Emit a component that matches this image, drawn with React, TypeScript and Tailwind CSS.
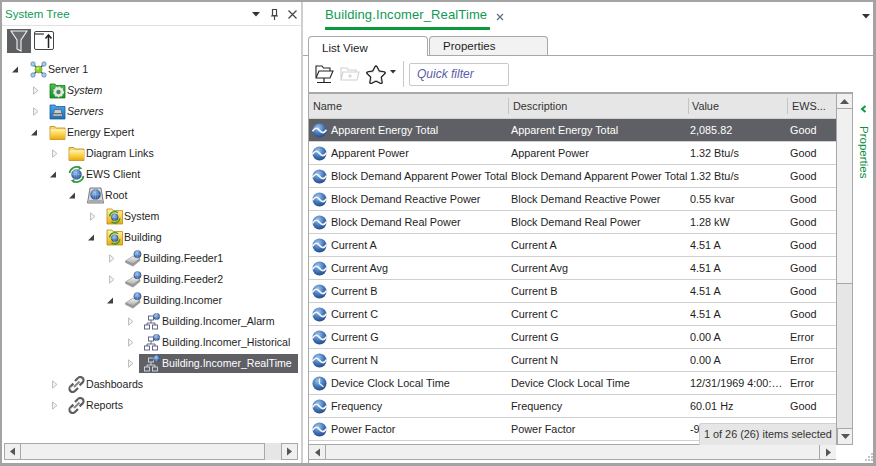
import React from "react";

const defs = (
  <svg width="0" height="0" className="absolute">
    <defs>
      <linearGradient id="yf" x1="0" y1="0" x2="0" y2="1">
        <stop offset="0" stopColor="#fff3b0" />
        <stop offset="0.5" stopColor="#fbd34a" />
        <stop offset="1" stopColor="#e9a90f" />
      </linearGradient>
      <radialGradient id="gl" cx="0.4" cy="0.3" r="0.8">
        <stop offset="0" stopColor="#9fc4ea" />
        <stop offset="0.55" stopColor="#3f73b5" />
        <stop offset="1" stopColor="#1f3f78" />
      </radialGradient>
      <linearGradient id="gf" x1="0" y1="0" x2="0" y2="1">
        <stop offset="0" stopColor="#4cc04c" />
        <stop offset="1" stopColor="#1b8f2b" />
      </linearGradient>
      <linearGradient id="bf" x1="0" y1="0" x2="0" y2="1">
        <stop offset="0" stopColor="#4aa6ec" />
        <stop offset="1" stopColor="#1670c4" />
      </linearGradient>
      <linearGradient id="dv" x1="0" y1="0" x2="0" y2="1">
        <stop offset="0" stopColor="#f4f4f4" />
        <stop offset="1" stopColor="#a8a8a8" />
      </linearGradient>
    </defs>
  </svg>
);

const Folder = () => (
  <svg width="17" height="16" viewBox="0 0 17 16" className="shrink-0">
    <path d="M1 1.5h5l1 1.5h9v11.5H1z" fill="#f7d668" stroke="#b98a1a" strokeWidth="0.8" />
    <rect x="1.5" y="4.2" width="14.5" height="10" fill="url(#yf)" />
  </svg>
);

const SystemFolder = () => (
  <svg width="17" height="16" viewBox="0 0 17 16" className="shrink-0">
    <path d="M1 1h5l1 1.5h9v12.5H1z" fill="url(#gf)" stroke="#157a22" strokeWidth="0.8" />
    <circle cx="9.5" cy="9" r="3.5" fill="none" stroke="#e4e9e4" strokeWidth="2.6" />
    <circle cx="9.5" cy="9" r="4.7" fill="none" stroke="#e4e9e4" strokeWidth="1.4" strokeDasharray="1.7 1.4" />
    <circle cx="9.5" cy="9" r="1.8" fill="#68746b" />
  </svg>
);

const ServersFolder = () => (
  <svg width="17" height="16" viewBox="0 0 17 16" className="shrink-0">
    <path d="M1 1h5l1 1.5h9v12.5H1z" fill="url(#bf)" stroke="#115f9f" strokeWidth="0.8" />
    <path d="M5.5 5.5h6.5l1 4H4.5z" fill="#c6ccd2" stroke="#59626b" strokeWidth="0.8" />
    <rect x="3.8" y="9.5" width="9.6" height="3" fill="#aab1b8" stroke="#59626b" strokeWidth="0.8" />
  </svg>
);

const Globe = ({ cx, cy, r }: { cx: number; cy: number; r: number }) => (
  <g>
    <circle cx={cx} cy={cy} r={r} fill="url(#gl)" stroke="#24477f" strokeWidth="0.4" />
    <path d={`M${cx - r} ${cy}h${2 * r}M${cx} ${cy - r}v${2 * r}`} stroke="#c7dcf2" strokeWidth="0.4" opacity="0.7" />
    <ellipse cx={cx} cy={cy} rx={r * 0.5} ry={r} fill="none" stroke="#c7dcf2" strokeWidth="0.4" opacity="0.7" />
  </g>
);

const Ews = () => (
  <svg width="17" height="17" viewBox="0 0 17 17" className="shrink-0">
    <path d="M1.5 7A7.2 7.2 0 0 1 12 1.8" fill="none" stroke="#2f9b3a" strokeWidth="1.7" />
    <path d="M15.5 10A7.2 7.2 0 0 1 5 15.2" fill="none" stroke="#2f9b3a" strokeWidth="1.7" />
    <path d="M11 0l3.2 2.6L10.6 4z" fill="#2f9b3a" />
    <path d="M6 17l-3.2-2.6L6.4 13z" fill="#2f9b3a" />
    <Globe cx={8.5} cy={8.5} r={5} />
  </svg>
);

const RootIcon = () => (
  <svg width="17" height="17" viewBox="0 0 17 17" className="shrink-0">
    <path d="M3 1h11l2.5 15H0.5z" fill="#d8d8d8" stroke="#6d6d6d" strokeWidth="0.9" strokeLinejoin="round" />
    <Globe cx={8.5} cy={7.6} r={5} />
    <rect x="2" y="13" width="13" height="2" fill="#a9a9a9" />
  </svg>
);

const GlobeFolder = () => (
  <svg width="17" height="17" viewBox="0 0 17 17" className="shrink-0">
    <path d="M1 1h5l1 1.5h9.5v13.5H1z" fill="url(#yf)" stroke="#b98a1a" strokeWidth="0.8" />
    <path d="M3.6 8.4a5.2 5.2 0 0 1 8.4-3.6" fill="none" stroke="#2f9b3a" strokeWidth="1.4" />
    <path d="M13.8 10.2a5.2 5.2 0 0 1-8.4 3.6" fill="none" stroke="#2f9b3a" strokeWidth="1.4" />
    <Globe cx={8.7} cy={9.2} r={3.5} />
  </svg>
);

const Device = () => (
  <svg width="17" height="17" viewBox="0 0 17 17" className="shrink-0">
    <path d="M0.5 11L8 6l7 2.5L8 14z" fill="url(#dv)" stroke="#8b8b8b" strokeWidth="0.6" />
    <path d="M0.5 11v1.6L8 16.2l7-5.6V8.5L8 14z" fill="#9a9a9a" stroke="#858585" strokeWidth="0.4" />
    <Globe cx={12.5} cy={4.2} r={3.7} />
  </svg>
);

const Net = ({ light }: { light?: boolean }) => {
  const c = light ? "#d8dae6" : "#56587c";
  const fill = light ? "#5d5f66" : "#fff";
  return (
    <svg width="17" height="17" viewBox="0 0 17 17" className="shrink-0">
      <rect x="4.5" y="3" width="5" height="4" fill={fill} stroke={c} strokeWidth="0.9" />
      <path d="M7 7v3M3 12v-2h8v2" fill="none" stroke={c} strokeWidth="0.9" />
      <rect x="0.5" y="12" width="5" height="4" fill={fill} stroke={c} strokeWidth="0.9" />
      <rect x="8.5" y="12" width="5" height="4" fill={fill} stroke={c} strokeWidth="0.9" />
      <Globe cx={12.5} cy={3.4} r={3.2} />
    </svg>
  );
};

const Chain = () => (
  <svg width="17" height="17" viewBox="0 0 17 17" className="shrink-0">
    <path d="M7 5l3-3a3 3 0 0 1 4.6 4.4l-3 3" fill="none" stroke="#5d5d5d" strokeWidth="2.2" />
    <path d="M10 12l-3 3a3 3 0 0 1-4.6-4.4l3-3" fill="none" stroke="#5d5d5d" strokeWidth="2.2" />
    <path d="M6 11l5.5-5.5" stroke="#8a8a8a" strokeWidth="2.2" />
    <path d="M10.5 2.8a2.5 2.5 0 0 1 3 1" fill="none" stroke="#d5d5d5" strokeWidth="0.8" />
    <path d="M3.2 10.5a2.5 2.5 0 0 0 0 3" fill="none" stroke="#d5d5d5" strokeWidth="0.8" />
  </svg>
);

const ServerIcon = () => (
  <svg width="17" height="17" viewBox="0 0 17 17" className="shrink-0">
    <path d="M3.5 3.5L13.5 13.5M13.5 3.5L3.5 13.5" stroke="#3d4f5c" strokeWidth="1.4" />
    <circle cx="8.5" cy="8.5" r="3.6" fill="#8fca2f" stroke="#5c8f18" strokeWidth="0.5" />
    <circle cx="7.8" cy="7.6" r="1.2" fill="#d4ee8e" />
    {[3, 14].map((x) =>
      [3, 14].map((y) => <circle key={`${x}${y}`} cx={x} cy={y} r="2.2" fill="#a5cdec" stroke="#4d7ea8" strokeWidth="0.7" />),
    )}
  </svg>
);

const Wave = ({ clock }: { clock?: boolean }) => (
  <svg width="15" height="15" viewBox="0 0 15 15" className="shrink-0">
    <circle cx="7.5" cy="7.5" r="7" fill="url(#gl)" />
    {clock ? (
      <path d="M7.5 2.5v5.2l4 3" fill="none" stroke="#eef4fb" strokeWidth="1.3" />
    ) : (
      <path d="M0.5 8.4C3 4.4 5 4.4 7.5 7.4s4.5 3 7 -0.6" fill="none" stroke="#f3f7fc" strokeWidth="1.7" />
    )}
  </svg>
);

const ArrowOpen = () => (
  <svg width="8" height="9" viewBox="0 0 8 9" className="shrink-0">
    <path d="M7 1.5L1 7.5h6z" fill="#404040" />
  </svg>
);
const ArrowClosed = () => (
  <svg width="8" height="9" viewBox="0 0 8 9" className="shrink-0 ml-[2px]">
    <path d="M1.5 0.8L6 4.5 1.5 8.2z" fill="#f2f2f2" stroke="#b8b8b8" strokeWidth="0.9" />
  </svg>
);

type Node = {
  depth: number;
  open?: boolean;
  icon: React.ReactNode;
  label: string;
  italic?: boolean;
  selected?: boolean;
};

const tree: Node[] = [
  { depth: 0, open: true, icon: <ServerIcon />, label: "Server 1" },
  { depth: 1, icon: <SystemFolder />, label: "System", italic: true },
  { depth: 1, icon: <ServersFolder />, label: "Servers", italic: true },
  { depth: 1, open: true, icon: <Folder />, label: "Energy Expert" },
  { depth: 2, icon: <Folder />, label: "Diagram Links" },
  { depth: 2, open: true, icon: <Ews />, label: "EWS Client" },
  { depth: 3, open: true, icon: <RootIcon />, label: "Root" },
  { depth: 4, icon: <GlobeFolder />, label: "System" },
  { depth: 4, open: true, icon: <GlobeFolder />, label: "Building" },
  { depth: 5, icon: <Device />, label: "Building.Feeder1" },
  { depth: 5, icon: <Device />, label: "Building.Feeder2" },
  { depth: 5, open: true, icon: <Device />, label: "Building.Incomer" },
  { depth: 6, icon: <Net />, label: "Building.Incomer_Alarm" },
  { depth: 6, icon: <Net />, label: "Building.Incomer_Historical" },
  { depth: 6, icon: <Net light />, label: "Building.Incomer_RealTime", selected: true },
  { depth: 2, icon: <Chain />, label: "Dashboards" },
  { depth: 2, icon: <Chain />, label: "Reports" },
];

const indents = ["pl-[9px]", "pl-[28px]", "pl-[47px]", "pl-[66px]", "pl-[85px]", "pl-[104px]", "pl-[123px]"];

const rows: [string, string, string, string][] = [
  ["Apparent Energy Total", "Apparent Energy Total", "2,085.82", "Good"],
  ["Apparent Power", "Apparent Power", "1.32 Btu/s", "Good"],
  ["Block Demand Apparent Power Total", "Block Demand Apparent Power Total", "1.32 Btu/s", "Good"],
  ["Block Demand Reactive Power", "Block Demand Reactive Power", "0.55 kvar", "Good"],
  ["Block Demand Real Power", "Block Demand Real Power", "1.28 kW", "Good"],
  ["Current A", "Current A", "4.51 A", "Good"],
  ["Current Avg", "Current Avg", "4.51 A", "Good"],
  ["Current B", "Current B", "4.51 A", "Good"],
  ["Current C", "Current C", "4.51 A", "Good"],
  ["Current G", "Current G", "0.00 A", "Error"],
  ["Current N", "Current N", "0.00 A", "Error"],
  ["Device Clock Local Time", "Device Clock Local Time", "12/31/1969 4:00:…", "Error"],
  ["Frequency", "Frequency", "60.01 Hz", "Good"],
  ["Power Factor", "Power Factor", "-9", ""],
];

const ScrollArrow = ({ d }: { d: string }) => (
  <svg width="7" height="9" viewBox="0 0 7 9">
    <path d={d} fill="#555" />
  </svg>
);

const Cell = ({ w, children }: { w: string; children: React.ReactNode }) => (
  <div className={`${w} shrink-0 overflow-hidden whitespace-nowrap`}>{children}</div>
);

const STAR = "M10 2l2.6 5 5.6.9-4 4 .9 5.6L10 15l-5.1 2.5.9-5.6-4-4L7.400 7z";

export default function App() {
  return (
    <div className="w-[876px] h-[466px] overflow-hidden flex bg-[#f0f0f0] border-t-2 border-l-2 border-r-[3px] border-b-[3px] border-[#a3a3a3] text-[10.85px] text-[#1e1e1e] font-['Liberation_Sans',Arial,sans-serif]">
      {defs}
      {/* Left */}
      <div className="w-[299px] shrink-0 flex flex-col bg-white">
        <div className="h-[24px] shrink-0 flex items-center pt-[2px] pl-[3px] pr-[4px] bg-white border-b border-[#e2e2e2]">
          <span className="text-[11.5px] text-[#0f9a55] flex-1">System Tree</span>
          <svg width="8" height="5" viewBox="0 0 8 5"><path d="M0 0h8L4 4.5z" fill="#333" /></svg>
          <svg width="7" height="11" viewBox="0 0 7 11" className="ml-[11px]">
            <path d="M1.500 0.500h4v6h-4zM0 7h7M3.500 7v4" fill="none" stroke="#444" strokeWidth="1.2" />
          </svg>
          <svg width="9" height="9" viewBox="0 0 9 9" className="ml-[10px]">
            <path d="M0.500 0.500l8 8M8.500 0.500l-8 8" stroke="#444" strokeWidth="1.2" />
          </svg>
        </div>
        <div className="h-[30px] shrink-0 flex items-start pt-[3px] pl-[5px] gap-[3px]">
          <div className="w-[24px] h-[24px] bg-[#5d5e62] flex items-center justify-center">
            <svg width="18" height="22" viewBox="0 0 18 22">
              <path d="M1 1h16L11 10v11l-4-2v-9z" fill="#6b6c70" stroke="#f2f2f2" strokeWidth="1.1" />
            </svg>
          </div>
          <svg width="20" height="20" viewBox="0 0 20 20" className="mt-[2px]">
            <rect x="0.500" y="0.500" width="19" height="18" rx="1.5" fill="#fff" stroke="#444" />
            <path d="M1 3h9" stroke="#333" strokeWidth="1.2" />
            <path d="M14.500 17V5M11.500 7.500l3-3.500 3 3.500" fill="none" stroke="#222" strokeWidth="1.5" />
          </svg>
        </div>
        <div className="flex-1 pt-[3px] min-h-0 text-[10.6px]">
          {tree.map((n, i) => (
            <div key={i} className={`h-[21px] flex items-center ${indents[n.depth]}`}>
              <div className="w-[19px] shrink-0 flex items-center justify-start">{n.open ? <ArrowOpen /> : <ArrowClosed />}</div>
              <div
                className={`flex items-center gap-[1px] h-[19px] ${n.selected ? "bg-[#5f6066] text-white w-[159px] -ml-[5px] pl-[5px]" : ""}`}
              >
                {n.icon}
                <span className={`whitespace-nowrap ${n.italic ? "italic" : ""}`}>{n.label}</span>
              </div>
            </div>
          ))}
        </div>
        <div className="h-[17px] shrink-0 mb-[3px] ml-[2px] mr-[3px] flex bg-[#e6e6e6]">
          <div className="w-[17px] border border-[#a8a8a8] bg-[#f0f0f0] flex items-center justify-center">
            <ScrollArrow d="M6 0.500v8L1 4.500z" />
          </div>
          <div className="w-[245px] border border-[#a8a8a8] bg-[#f0f0f0] -ml-px" />
          <div className="flex-1" />
          <div className="w-[17px] border border-[#a8a8a8] bg-[#f0f0f0] flex items-center justify-center">
            <ScrollArrow d="M1 0.500v8L6 4.500z" />
          </div>
        </div>
      </div>

      {/* Splitter */}
      <div className="w-[2px] shrink-0 bg-[#cfcfcf]" />

      {/* Right */}
      <div className="flex-1 min-w-0 flex flex-col bg-white">
        <div className="h-[34px] shrink-0 flex items-start bg-white pl-[22px] pr-[3px]">
          <div className="mt-[5px] h-[23px] w-[165px] border-b-[3px] border-[#0a9a3c] text-[13px] tracking-[0.12px] text-[#0f9a55] leading-[16px] whitespace-nowrap">
            Building.Incomer_RealTime
          </div>
          <svg width="8" height="8" viewBox="0 0 8 8" className="ml-[6px] mt-[11px]">
            <path d="M1 1l6 6M7 1l-6 6" stroke="#5a7088" strokeWidth="1.2" />
          </svg>
          <div className="flex-1" />
          <svg width="8" height="5" viewBox="0 0 8 5" className="mt-[12px]"><path d="M0 0h8L4 4.5z" fill="#333" /></svg>
        </div>
        <div className="h-[20px] shrink-0 flex items-end gap-[1px] pl-[5px] border-b border-[#a8a8a8] text-[11.5px]">
          <div className="w-[120px] h-[20px] -mb-px bg-white border border-b-0 border-[#a8a8a8] rounded-t-[4px] pl-[13px] pt-[3px]">List View</div>
          <div className="w-[119px] h-[19px] bg-[#f2f2f2] border border-b-0 border-[#a8a8a8] rounded-t-[4px] pl-[13px] pt-[1px]">Properties</div>
        </div>
        <div className="flex-1 min-h-0 flex">
          <div className="flex-1 min-w-0 flex flex-col border-l border-[#a8a8a8] ml-[5px] pb-[3px]">
            <div className="h-[36px] shrink-0 flex items-center pl-[5px]">
              <svg width="20" height="22" viewBox="0 0 20 22">
                <path d="M2 14V3h6l1.500 2h6.500v3" fill="#fff" stroke="#222" strokeWidth="1.1" />
                <path d="M2 15l3-7h14l-3 7z" fill="#fff" stroke="#222" strokeWidth="1.1" />
                <path d="M10 15v4M3 19.500h14" fill="none" stroke="#222" strokeWidth="1.2" />
              </svg>
              <svg width="20" height="16" viewBox="0 0 20 16" className="ml-[6px]">
                <path d="M1 14V2h6l1 2h8v2M1 14l2-8h16l-2 8z" fill="#fff" stroke="#d0d0d0" strokeWidth="1.1" />
                <path d="M10 8v4M8 10h4" stroke="#d0d0d0" />
              </svg>
              <svg width="20" height="19" viewBox="0 0 20 19" className="ml-[6px]">
                <path d={STAR} fill="#222" stroke="#222" strokeWidth="3.4" strokeLinejoin="round" />
                <path d={STAR} fill="#fff" stroke="#fff" strokeWidth="0.8" strokeLinejoin="round" />
              </svg>
              <svg width="6" height="4" viewBox="0 0 6 4" className="ml-[4px] mb-[4px]"><path d="M0 0h6L3 3.500z" fill="#333" /></svg>
              <div className="w-px h-[26px] bg-[#c8c8c8] ml-[7px]" />
              <div className="ml-[5px] w-[100px] h-[23px] border border-[#c8c8c8] rounded-[2px] italic text-[12px] text-[#5a5aa8] flex items-center pl-[7px]">Quick filter</div>
            </div>
            <div className="flex-1 min-h-0 flex flex-col border-t-2 border-[#a8a8a8]">
              <div className="h-[25px] shrink-0 flex items-center bg-[#e6e6e6] text-[#333] border-b border-[#cfcfcf] pl-[4px]">
                <Cell w="w-[195px]">Name</Cell>
                <div className="w-px h-[16px] bg-[#c4c4c4] shrink-0" />
                <Cell w="w-[179px] pl-[4px]">Description</Cell>
                <div className="w-px h-[16px] bg-[#c4c4c4] shrink-0" />
                <Cell w="w-[98px] pl-[3px]">Value</Cell>
                <div className="w-px h-[16px] bg-[#c4c4c4] shrink-0" />
                <Cell w="w-[47px] pl-[4px]">EWS...</Cell>
              </div>
              <div className="flex-1 min-h-0 overflow-hidden">
                {rows.map((r, i) => (
                  <div
                    key={i}
                    className={`h-[23px] flex items-center border-b border-[#d0d0d0] pl-[3px] ${i === 0 ? "bg-[#5f6066] text-white" : ""}`}
                  >
                    <Wave clock={r[0].startsWith("Device")} />
                    <Cell w="w-[184px] pl-[4px]">{r[0]}</Cell>
                    <Cell w="w-[179px]">{r[1]}</Cell>
                    <Cell w="w-[100px] pr-[6px]">{r[2]}</Cell>
                    <Cell w="w-[46px]">{r[3]}</Cell>
                  </div>
                ))}
              </div>
              <div className="h-[16px] shrink-0 flex bg-[#e6e6e6] border-t border-[#a8a8a8] border-b">
                <div className="w-[17px] border-r border-[#a8a8a8] bg-[#f0f0f0] flex items-center justify-center">
                  <ScrollArrow d="M6 0.500v8L1 4.500z" />
                </div>
                <div className="flex-1 bg-[#f0f0f0]" />
                <div className="w-[17px] border-l border-[#a8a8a8] bg-[#f0f0f0] flex items-center justify-center">
                  <ScrollArrow d="M1 0.500v8L6 4.500z" />
                </div>
              </div>
            </div>
          </div>

          {/* vertical scrollbar */}
          <div className="w-[17px] shrink-0 mt-[36px] mb-[18px] flex flex-col bg-[#e6e6e6] border-t-2 border-x border-[#a8a8a8]">
            <div className="h-[15px] border-b border-[#a8a8a8] bg-[#f0f0f0] flex items-center justify-center">
              <svg width="9" height="5" viewBox="0 0 9 5"><path d="M0 5h9L4.500 0z" fill="#555" /></svg>
            </div>
            <div className="h-[175px] border-b border-[#a8a8a8] bg-[#f0f0f0]" />
          </div>

          {/* Properties strip */}
          <div className="w-[20px] shrink-0 flex flex-col items-center pt-[49px]">
            <svg width="7" height="8" viewBox="0 0 7 8"><path d="M5.500 1L2 4l3.500 3" fill="none" stroke="#0a9a3c" strokeWidth="2" /></svg>
            <span className="mt-[13px] [writing-mode:vertical-rl] text-[11.5px] text-[#0a8f3c]">Properties</span>
          </div>
        </div>
      </div>

      {/* Status overlay */}
      <div className="absolute left-[699px] top-[423px] w-[137px] h-[22px] bg-[#e6e6e6] border-t border-l border-[#cfcfcf] rounded-tl-[3px] flex items-center pl-[4px] text-[#333] whitespace-nowrap">
        1 of 26 (26) items selected
      </div>
      <div className="absolute left-[837px] top-[428px] w-[16px] h-[17px] bg-[#f0f0f0] border border-[#a8a8a8] flex items-center justify-center">
        <svg width="9" height="5" viewBox="0 0 9 5"><path d="M0 0h9L4.500 5z" fill="#555" /></svg>
      </div>
      <svg width="11" height="10" viewBox="0 0 11 10" className="absolute left-[862px] top-[453px]">
        <path d="M9 0h2v2H9zM6 3h2v2H6zM9 3h2v2H9zM3 6h2v2H3zM6 6h2v2H6zM9 6h2v2H9z" fill="#c4c4c4" />
      </svg>
    </div>
  );
}
